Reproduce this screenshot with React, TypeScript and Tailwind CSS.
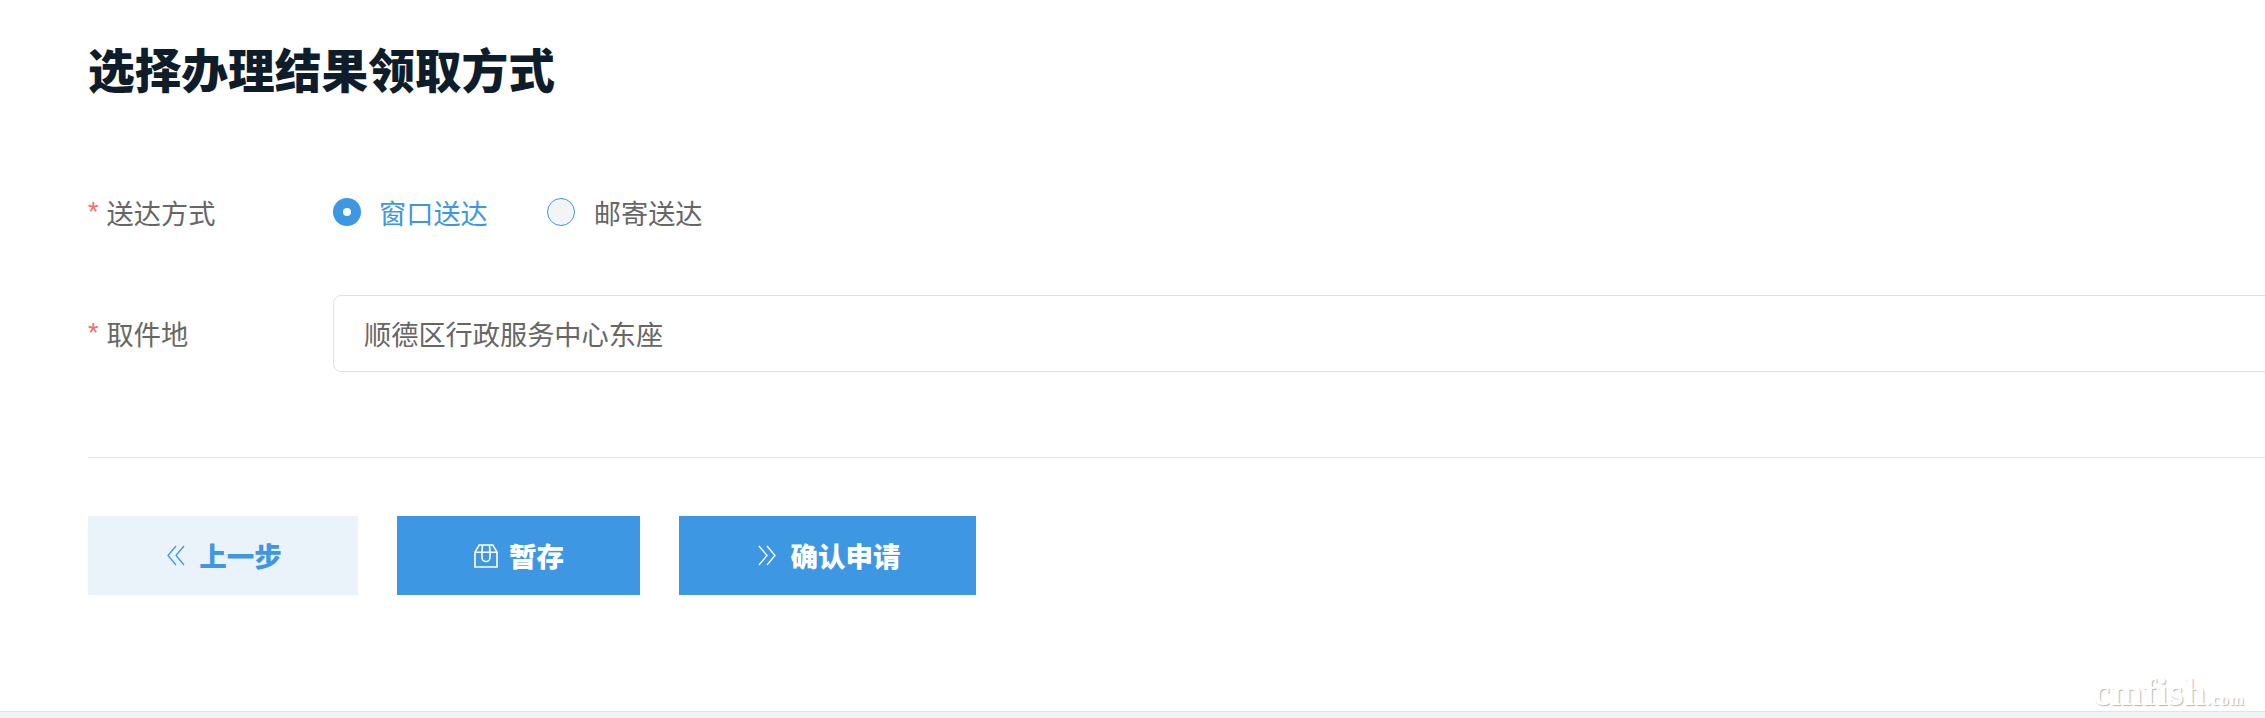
const FONT = "font-['Noto_Sans_CJK_SC','Noto_Sans',sans-serif]";

const DoubleLeft = ({ className }: { className?: string }) => (
  <svg viewBox="0 0 18 21" fill="none" stroke="currentColor" strokeWidth="1.3" className={className}>
    <path d="M9 1 1 10.5 9 20M17 1 9 10.5 17 20" />
  </svg>
);

const DoubleRight = ({ className }: { className?: string }) => (
  <svg viewBox="0 0 18 21" fill="none" stroke="currentColor" strokeWidth="1.3" className={className}>
    <path d="M1 1 9 10.5 1 20M9 1 17 10.5 9 20" />
  </svg>
);

const BoxIcon = ({ className }: { className?: string }) => (
  <svg viewBox="0 0 24 24" fill="none" stroke="currentColor" strokeWidth="1.6" className={className}>
    <path d="M1 8.2 5.2 1h13.6L23 8.2V23H1V8.2Z" />
    <path d="M1 8.2h22M8.5 1 8 8.2v5.3a3.9 3.9 0 0 0 8 0V8.2L15.5 1" />
  </svg>
);

const Label = ({ children }: { children: React.ReactNode }) => (
  <div className="flex w-[245px] shrink-0 items-center text-[27.2px] text-[#666666]">
    <span className="mr-[8px] font-['Liberation_Sans',sans-serif] text-[#f56c6c]">*</span>
    {children}
  </div>
);

export default function App() {
  return (
    <div className={`flex h-screen flex-col overflow-hidden bg-white ${FONT}`}>
      <main className="flex-1 overflow-hidden pl-[88px]">
        <h1 className="mt-[34px] text-[46.7px] leading-[68px] font-black text-[#0f1d2b]">
          选择办理结果领取方式
        </h1>

        <div className="mt-[90px] flex h-[40px] items-center">
          <Label>送达方式</Label>
          <div className="flex items-center">
            <span className="flex h-[28px] w-[28px] items-center justify-center rounded-full bg-[#3e97e2]">
              <span className="h-[8px] w-[8px] rounded-full bg-white" />
            </span>
            <span className="ml-[18px] text-[27.2px] text-[#3e97e2]">窗口送达</span>
          </div>
          <div className="ml-[59px] flex items-center">
            <span className="h-[28px] w-[28px] rounded-full border border-[#3e97e2] bg-[#f3f4f5]" />
            <span className="ml-[19px] text-[27.2px] text-[#666666]">邮寄送达</span>
          </div>
        </div>

        <div className="mt-[63px] flex items-center">
          <Label>取件地</Label>
          <div className="mr-[-20px] flex h-[77px] flex-1 items-center rounded-[8px] border border-[#dfe1e6] pl-[30px] text-[27.2px] text-[#666666]">
            顺德区行政服务中心东座
          </div>
        </div>

        <div className="mt-[85px] border-t border-[#e3e4e7]" />

        <div className="mt-[58px] flex gap-[39px] text-[27.5px] font-black">
          <button className="flex h-[79px] w-[270px] items-center justify-center gap-[14px] bg-[#ebf3fa] pl-[3px] text-[#3e97e2]">
            <DoubleLeft className="h-[21px] w-[18px]" />
            上一步
          </button>
          <button className="flex h-[79px] w-[243px] items-center justify-center gap-[11px] bg-[#3e97e2] pl-[1px] text-white">
            <BoxIcon className="h-[24px] w-[24px]" />
            暂存
          </button>
          <button className="flex h-[79px] w-[297px] items-center justify-center gap-[15px] bg-[#3e97e2] pl-[3px] text-white">
            <DoubleRight className="h-[21px] w-[18px]" />
            确认申请
          </button>
        </div>
      </main>

      <footer className="relative h-[7px] shrink-0 border-t border-[#e2e3e6] bg-[#f1f2f4]">
        <div className="absolute right-[20px] bottom-[7px] flex items-baseline font-['Liberation_Serif',serif] leading-none font-bold text-white [text-shadow:1px_1px_1px_#b5b5b5]">
          <span className="text-[38px] tracking-[1px]">cmfish</span>
          <span className="text-[17px] tracking-[1px]">.com</span>
        </div>
      </footer>
    </div>
  );
}
